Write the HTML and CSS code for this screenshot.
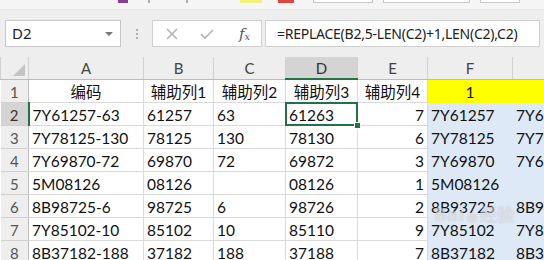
FILE: index.html
```html
<!DOCTYPE html>
<html lang="zh-CN">
<head>
  <meta charset="UTF-8">
  <meta name="viewport" content="width=device-width, initial-scale=1.0">
  <title>REPLACE</title>
  <link rel="stylesheet" href="styles.css">
</head>
<body>

<div class="ribbon">
  <span class="swatch purple"></span>
  <span class="tick t1"></span>
  <span class="tick t2"></span>
  <span class="swatch yellow"></span>
  <span class="swatch red"></span>
  <span class="combo c1"></span>
  <span class="combo c2"></span>
  <span class="combo c3"></span>
</div>

<div class="formula-bar">
  <div class="name-box">D2<span class="caret"></span></div>
  <div class="grip"><i></i><i></i><i></i></div>
  <div class="fx-buttons">
    <svg class="btn-icon" width="14" height="14" viewBox="0 0 14 14">
      <path d="M2 2 L12 12 M12 2 L2 12" stroke="#b4b4b4" stroke-width="1.6" fill="none"/>
    </svg>
    <svg class="btn-icon" width="16" height="14" viewBox="0 0 16 14">
      <path d="M2 7 L6 11 L14 3" stroke="#b4b4b4" stroke-width="1.6" fill="none"/>
    </svg>
    <span class="fx">f<sub>x</sub></span>
  </div>
  <div class="formula-input">=REPLACE(B2,5-LEN(C2)+1,LEN(C2),C2)</div>
</div>

<div class="sheet">
  <table class="grid">
    <colgroup>
      <col class="w-head"><col class="w-a"><col class="w-b"><col class="w-c"><col class="w-d"><col class="w-e"><col class="w-f"><col class="w-g">
    </colgroup>
    <thead>
      <tr>
        <th class="corner"><span class="tri"></span></th>
        <th>A</th><th>B</th><th>C</th><th class="sel-col">D</th><th>E</th><th>F</th><th></th>
      </tr>
    </thead>
    <tbody>
      <tr class="title-row">
        <th>1</th>
        <td>编码</td><td>辅助列1</td><td>辅助列2</td><td>辅助列3</td><td>辅助列4</td>
        <td class="yellow">1</td><td class="yellow"></td>
      </tr>
      <tr>
        <th class="sel-row">2</th>
        <td>7Y61257-63</td><td>61257</td><td>63</td><td class="active">61263</td><td class="num">7</td>
        <td class="blue">7Y61257</td><td class="blue">7Y61257</td>
      </tr>
      <tr>
        <th>3</th>
        <td>7Y78125-130</td><td>78125</td><td>130</td><td>78130</td><td class="num">6</td>
        <td class="blue">7Y78125</td><td class="blue">7Y78125</td>
      </tr>
      <tr>
        <th>4</th>
        <td>7Y69870-72</td><td>69870</td><td>72</td><td>69872</td><td class="num">3</td>
        <td class="blue">7Y69870</td><td class="blue">7Y69870</td>
      </tr>
      <tr>
        <th>5</th>
        <td>5M08126</td><td>08126</td><td></td><td>08126</td><td class="num">1</td>
        <td class="blue">5M08126</td><td class="blue"></td>
      </tr>
      <tr>
        <th>6</th>
        <td>8B98725-6</td><td>98725</td><td>6</td><td>98726</td><td class="num">2</td>
        <td class="blue">8B93725</td><td class="blue">8B98725</td>
      </tr>
      <tr>
        <th>7</th>
        <td>7Y85102-10</td><td>85102</td><td>10</td><td>85110</td><td class="num">9</td>
        <td class="blue">7Y85102</td><td class="blue">7Y85102</td>
      </tr>
      <tr>
        <th>8</th>
        <td>8B37182-188</td><td>37182</td><td>188</td><td>37188</td><td class="num">7</td>
        <td class="blue">8B37182</td><td class="blue">8B37182</td>
      </tr>
    </tbody>
  </table>
  <div class="watermark">Bai<span class="paw">●</span>经验</div>
</div>

</body>
</html>
```

FILE: styles.css
```css
/* Excel window crop */
body {
  margin: 0;
  width: 544px;
  height: 260px;
  overflow: hidden;
  background: #eeeeee;
  font-family: Lato, "Noto Sans CJK SC", sans-serif;
}

/* ribbon remnants */
.ribbon {
  height: 10px;
  display: flex;
  align-items: flex-start;
  background: #f5f5f5;
  border-bottom: 1px solid #e4e4e4;
  box-sizing: border-box;
}
.swatch {
  height: 3px;
}
.purple { margin-left: 118px; width: 10px; background: #8a3d93; }
.tick { width: 2px; height: 3px; background: #b0b0b0; }
.t1 { margin-left: 20px; }
.t2 { margin-left: 36px; }
.yellow.swatch { margin-left: 52px; width: 22px; background: #f2f27a; }
.red { margin-left: 16px; width: 16px; background: #e0463c; }
.combo {
  height: 2px;
  background: #fff;
  border: 1px solid #c8c8c8;
  border-top: none;
}
.c1 { margin-left: 19px; width: 58px; }
.c2 { margin-left: 10px; width: 85px; }
.c3 { margin-left: 10px; width: 38px; }

/* formula bar */
.formula-bar {
  display: flex;
  height: 27px;
  padding: 10px 0 10px 5px;
  background: #eeeeee;
}
.name-box {
  width: 116px;
  box-sizing: border-box;
  background: #fff;
  border: 1px solid #c6c6c6;
  padding-left: 6px;
  font-family: "Noto Sans", sans-serif;
  font-size: 15px;
  line-height: 25px;
  color: #222;
  position: relative;
}
.caret {
  position: absolute;
  right: 7px;
  top: 11px;
  border-left: 4px solid transparent;
  border-right: 4px solid transparent;
  border-top: 4px solid #777;
}
.grip {
  width: 31px;
  display: flex;
  flex-direction: column;
  align-items: center;
  justify-content: center;
  gap: 2px;
}
.grip i {
  width: 2px;
  height: 2px;
  background: #b0b0b0;
}
.fx-buttons {
  width: 110px;
  box-sizing: border-box;
  background: #fff;
  border: 1px solid #d0d0d0;
  display: flex;
  align-items: center;
  padding-left: 12px;
  gap: 20px;
}
.fx {
  font-family: "DejaVu Serif", serif;
  font-style: italic;
  font-size: 15px;
  color: #555;
  margin-left: 4px;
}
.fx sub {
  font-size: 10px;
  vertical-align: -1px;
}
.formula-input {
  flex: 1;
  margin: 0 4px 0 3px;
  background: #fff;
  border: 1px solid #d0d0d0;
  padding-left: 11px;
  font-family: "Noto Sans", sans-serif;
  font-size: 14px;
  letter-spacing: -0.25px;
  line-height: 25px;
  color: #222;
  white-space: nowrap;
  overflow: hidden;
}

/* sheet */
.sheet {
  position: relative;
  overflow: hidden;
  background: #fff;
}
.grid {
  border-collapse: collapse;
  table-layout: fixed;
  width: 597px;
}
.w-head { width: 28px; }
.w-a { width: 115px; }
.w-b { width: 70px; }
.w-c { width: 72px; }
.w-d { width: 72px; }
.w-e { width: 70px; }
.w-f { width: 85px; }
.w-g { width: 85px; }

th {
  background: #eeeeee;
  color: #444;
  font-weight: normal;
  font-size: 15px;
  border: 1px solid #d0d0d0;
  padding: 0;
}
thead th {
  height: 21px;
  border-top: none;
  border-bottom-color: #bcbcbc;
}
thead th.corner {
  position: relative;
}
.tri {
  position: absolute;
  right: 3px;
  bottom: 3px;
  border-left: 12px solid transparent;
  border-bottom: 12px solid #c4c4c4;
}
tbody th {
  border-left: none;
  border-right-color: #bcbcbc;
  color: #555;
  vertical-align: bottom;
  line-height: 20px;
}
th.sel-col {
  background: #d4d4d4;
  border-bottom: 2px solid #217346;
  color: #333;
}
th.sel-row {
  background: #d4d4d4;
  border-right: 2px solid #217346;
  color: #333;
}

td {
  height: 21px;
  border: 1px solid #dadada;
  padding: 1px 3px 0;
  font-size: 15.5px;
  color: #111;
  white-space: nowrap;
  overflow: hidden;
  vertical-align: bottom;
  line-height: 20px;
}
.title-row td {
  text-align: center;
}
td.num {
  text-align: right;
}
td.yellow {
  background: #ffff00;
  border-color: #ffff00;
}
td.blue {
  background: #dde9f6;
  border-color: #dde9f6;
}
td.active {
  position: relative;
  overflow: visible;
}
td.active::after {
  content: "";
  position: absolute;
  left: -1px;
  top: -1px;
  right: -1px;
  bottom: -1px;
  border: 2px solid #217346;
}
td.active::before {
  content: "";
  position: absolute;
  right: -4px;
  bottom: -4px;
  width: 5px;
  height: 5px;
  background: #217346;
  border: 1px solid #fff;
  z-index: 1;
}

.watermark {
  position: absolute;
  left: 434px;
  top: 144px;
  font-family: "DejaVu Sans", sans-serif;
  font-size: 17px;
  font-weight: bold;
  color: rgba(255, 255, 255, 0.5);
  text-shadow: 0 0 1px rgba(0, 0, 0, 0.2);
}
.paw {
  font-size: 13px;
  margin: 0 2px;
}
```
